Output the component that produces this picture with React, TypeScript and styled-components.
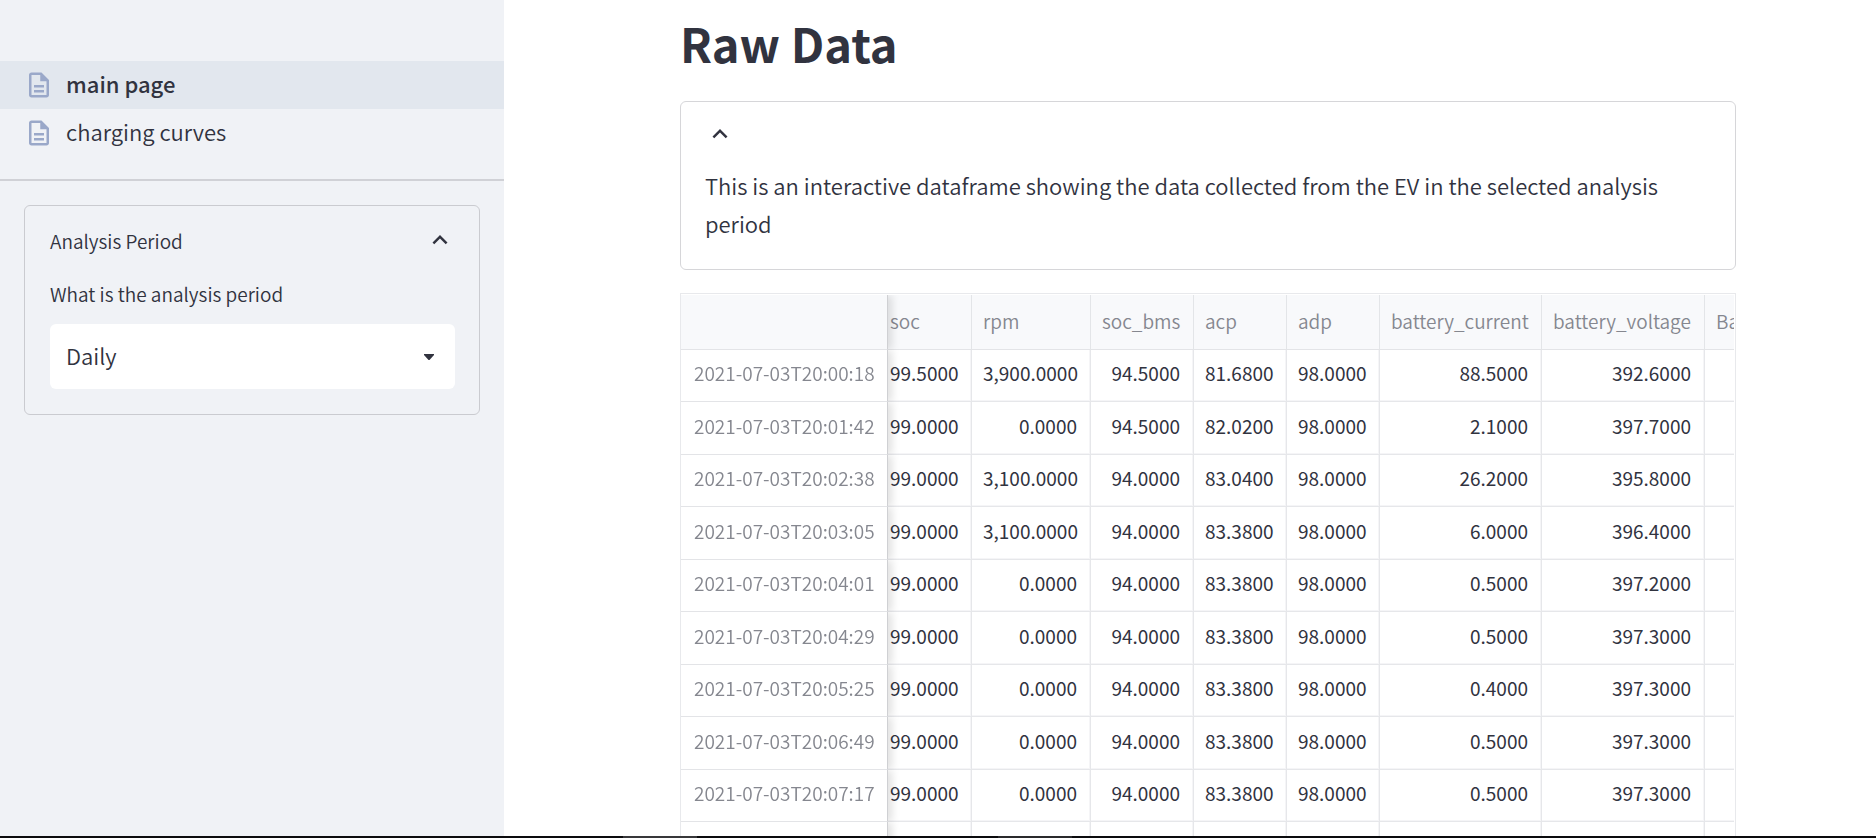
import React, { useLayoutEffect, useRef, useState } from "react";
import styled, { createGlobalStyle } from "styled-components";

const GlobalStyle = createGlobalStyle`
  *, *::before, *::after { box-sizing: border-box; }
  body {
    margin: 0;
    overflow: hidden;
    background: #ffffff;
    color: #31333f;
    font-family: "Source Sans Pro", "Noto Sans CJK SC", "Noto Sans", sans-serif;
    font-size: 22px;
  }
  button, select { font: inherit; color: inherit; }
`;

const Page = styled.div`
  display: flex;
  flex-direction: column;
  height: 100vh;
`;

const Workspace = styled.div`
  display: flex;
  flex: 1;
  min-height: 0;
`;

const Sidebar = styled.aside`
  flex: none;
  width: 504px;
  padding-top: 61px;
  background: #f0f2f6;
`;

const Nav = styled.nav`
  padding-bottom: 22px;
  border-bottom: 2px solid #d0d1d6;
`;

const NavLink = styled.a<{ $active?: boolean }>`
  display: flex;
  align-items: center;
  gap: 12px;
  height: 48px;
  padding: 0 24px;
  color: #31333f;
  font-size: 22px;
  font-weight: ${(p) => (p.$active ? 500 : 350)};
  text-decoration: none;
  background: ${(p) => (p.$active ? "#e2e7ee" : "transparent")};
`;

const NavText = styled.span`
  padding-bottom: 4px;
`;

const DocIcon = styled.svg`
  flex: none;
  width: 30px;
  height: 30px;
  fill: #9aa8c9;
`;

const Expander = styled.section<{ $tone: string }>`
  border: 1px solid ${(p) => p.$tone};
  border-radius: 6px;
`;

const SidebarExpander = styled(Expander)`
  margin: 24px;
  padding: 0 24px 25px 25px;
`;

const ExpanderToggle = styled.button`
  display: flex;
  align-items: center;
  justify-content: space-between;
  width: 100%;
  height: 72px;
  padding: 0 0 4px;
  border: 0;
  background: none;
  font-size: 19px;
  font-weight: 350;
  text-align: left;
  cursor: pointer;
`;

const Chevron = styled.svg`
  flex: none;
  width: 30px;
  height: 30px;
  fill: #31333f;
`;

const Label = styled.label`
  display: block;
  margin-bottom: 14px;
  font-size: 19px;
  font-weight: 350;
  line-height: 32px;
`;

const SelectBox = styled.div`
  display: grid;
  align-items: center;
  > * { grid-area: 1 / 1; }
`;

const Select = styled.select`
  width: 100%;
  height: 65px;
  padding: 0 48px 4px 16px;
  border: 0;
  border-radius: 6px;
  appearance: none;
  background: #ffffff;
  font-size: 22px;
  font-weight: 350;
`;

const Caret = styled.svg`
  justify-self: end;
  width: 10px;
  height: 6px;
  margin-right: 21px;
  fill: #31333f;
  pointer-events: none;
`;

const Main = styled.main`
  flex: 1;
  min-width: 0;
  padding: 10px 140px 0 176px;
  overflow: hidden;
`;

const Title = styled.h1`
  margin: 0 0 25px;
  font-size: 47px;
  font-weight: 700;
  line-height: 66px;
`;

const MainExpander = styled(Expander)`
  padding: 0 25px 27px 24px;
`;

const IconToggle = styled.button`
  display: block;
  height: 64px;
  padding: 0;
  border: 0;
  background: none;
  line-height: 0;
  cursor: pointer;
`;

const Description = styled.p`
  margin: 0;
  font-size: 22px;
  font-weight: 350;
  line-height: 38px;
`;

const Frame = styled.div`
  margin-top: 23px;
  padding-top: 1px;
  padding-right: 1px;
  border: 1px solid #e8e9ec;
`;

const Scroller = styled.div`
  overflow: hidden;
`;

const Table = styled.table`
  width: 1400px;
  table-layout: fixed;
  border-collapse: separate;
  border-spacing: 0;
  font-size: 19px;
  tbody tr:nth-child(odd) { height: 52px; }
  tbody tr:nth-child(even) { height: 53px; }
`;

const HeadRow = styled.tr`
  height: 55px;
`;

const HeadCell = styled.th`
  padding: 0 12px 4px 11px;
  border-right: 1px solid #e3e5e8;
  border-bottom: 1px solid #e3e4e7;
  background: #f8f9fb;
  color: #85878f;
  font-weight: 350;
  text-align: left;
  white-space: nowrap;
`;

const Cell = styled.td`
  padding: 0 13px 6px 11px;
  border-right: 1px solid #e6e7ea;
  border-bottom: 1px solid #e6e7ea;
  box-shadow: inset -1px -1px #f5f5f7;
  text-align: right;
  white-space: nowrap;
`;

const pinned = `
  position: sticky;
  left: 0;
  z-index: 1;
  padding-left: 13px;
  border-right: 1px solid #cfd0d3;
  box-shadow: 4px 0 8px rgba(0, 0, 0, 0.12);
  clip-path: inset(0 -16px 0 0);
`;

const PinnedHead = styled(HeadCell)`
  ${pinned}
`;

const PinnedCell = styled(HeadCell)`
  ${pinned}
  padding-bottom: 6px;
  background: #ffffff;
`;

const StatusStrip = styled.footer`
  display: grid;
  flex: none;
  grid-template-columns: 623fr 74fr 301fr 74fr 804fr;
  height: 2px;
  background: #0c0c0e;
`;

const StripMark = styled.span<{ $column: number; $tone: string }>`
  grid-row: 1;
  grid-column: ${(p) => p.$column};
  background: ${(p) => p.$tone};
`;

const columns = [
  { name: "soc", width: 93 },
  { name: "rpm", width: 119 },
  { name: "soc_bms", width: 103 },
  { name: "acp", width: 93 },
  { name: "adp", width: 93 },
  { name: "battery_current", width: 162 },
  { name: "battery_voltage", width: 163 },
  { name: "Battery_temp", width: 367 },
];

const rows: string[][] = [
  ["2021-07-03T20:00:18", "99.5000", "3,900.0000", "94.5000", "81.6800", "98.0000", "88.5000", "392.6000"],
  ["2021-07-03T20:01:42", "99.0000", "0.0000", "94.5000", "82.0200", "98.0000", "2.1000", "397.7000"],
  ["2021-07-03T20:02:38", "99.0000", "3,100.0000", "94.0000", "83.0400", "98.0000", "26.2000", "395.8000"],
  ["2021-07-03T20:03:05", "99.0000", "3,100.0000", "94.0000", "83.3800", "98.0000", "6.0000", "396.4000"],
  ["2021-07-03T20:04:01", "99.0000", "0.0000", "94.0000", "83.3800", "98.0000", "0.5000", "397.2000"],
  ["2021-07-03T20:04:29", "99.0000", "0.0000", "94.0000", "83.3800", "98.0000", "0.5000", "397.3000"],
  ["2021-07-03T20:05:25", "99.0000", "0.0000", "94.0000", "83.3800", "98.0000", "0.4000", "397.3000"],
  ["2021-07-03T20:06:49", "99.0000", "0.0000", "94.0000", "83.3800", "98.0000", "0.5000", "397.3000"],
  ["2021-07-03T20:07:17", "99.0000", "0.0000", "94.0000", "83.3800", "98.0000", "0.5000", "397.3000"],
  ["", "", "", "", "", "", "", ""],
];

function PageIcon() {
  return (
    <DocIcon viewBox="0 0 24 24" aria-hidden="true">
      <path d="M8 16h8v2H8zm0-4h8v2H8zm6-10H6c-1.1 0-2 .9-2 2v16c0 1.1.89 2 1.99 2H18c1.1 0 2-.9 2-2V8l-6-6zm4 18H6V4h7v5h5v11z" />
    </DocIcon>
  );
}

function ChevronUp() {
  return (
    <Chevron viewBox="0 0 24 24" aria-hidden="true">
      <path d="M12 8l-6 6 1.41 1.41L12 10.83l4.59 4.58L18 14z" />
    </Chevron>
  );
}

function DataTable() {
  const scroller = useRef<HTMLDivElement>(null);

  useLayoutEffect(() => {
    if (scroller.current) scroller.current.scrollLeft = 9;
  }, []);

  return (
    <Frame>
      <Scroller ref={scroller}>
        <Table>
          <colgroup>
            <col width={207} />
            {columns.map((c) => (
              <col key={c.name} width={c.width} />
            ))}
          </colgroup>
          <thead>
            <HeadRow>
              <PinnedHead aria-label="timestamp" />
              {columns.map((c) => (
                <HeadCell key={c.name} scope="col">{c.name}</HeadCell>
              ))}
            </HeadRow>
          </thead>
          <tbody>
            {rows.map(([time, ...values], i) => (
              <tr key={i}>
                <PinnedCell scope="row">{time}</PinnedCell>
                {values.map((v, j) => (
                  <Cell key={j}>{v}</Cell>
                ))}
                <Cell />
              </tr>
            ))}
          </tbody>
        </Table>
      </Scroller>
    </Frame>
  );
}

export default function App() {
  const [period, setPeriod] = useState("Daily");

  return (
    <Page>
      <GlobalStyle />
      <Workspace>
        <Sidebar>
          <Nav aria-label="Pages">
            <NavLink href="#main" $active aria-current="page">
              <PageIcon />
              <NavText>main page</NavText>
            </NavLink>
            <NavLink href="#charging">
              <PageIcon />
              <NavText>charging curves</NavText>
            </NavLink>
          </Nav>
          <SidebarExpander $tone="#cacbd0">
            <ExpanderToggle type="button" aria-expanded="true">
              Analysis Period
              <ChevronUp />
            </ExpanderToggle>
            <Label htmlFor="period">What is the analysis period</Label>
            <SelectBox>
              <Select id="period" value={period} onChange={(e) => setPeriod(e.target.value)}>
                <option>Daily</option>
                <option>Weekly</option>
                <option>Monthly</option>
              </Select>
              <Caret viewBox="0 0 10 6" aria-hidden="true">
                <path d="M0 0h10v1L5.500 6h-1L0 1z" />
              </Caret>
            </SelectBox>
          </SidebarExpander>
        </Sidebar>
        <Main>
          <Title>Raw Data</Title>
          <MainExpander $tone="#d6d6d9">
            <IconToggle type="button" aria-expanded="true" aria-label="Toggle description">
              <ChevronUp />
            </IconToggle>
            <Description>
              This is an interactive dataframe showing the data collected from the EV in the selected analysis period
            </Description>
          </MainExpander>
          <DataTable />
        </Main>
      </Workspace>
      <StatusStrip>
        <StripMark $column={2} $tone="#38383a" />
        <StripMark $column={4} $tone="#2a2a2c" />
      </StatusStrip>
    </Page>
  );
}
